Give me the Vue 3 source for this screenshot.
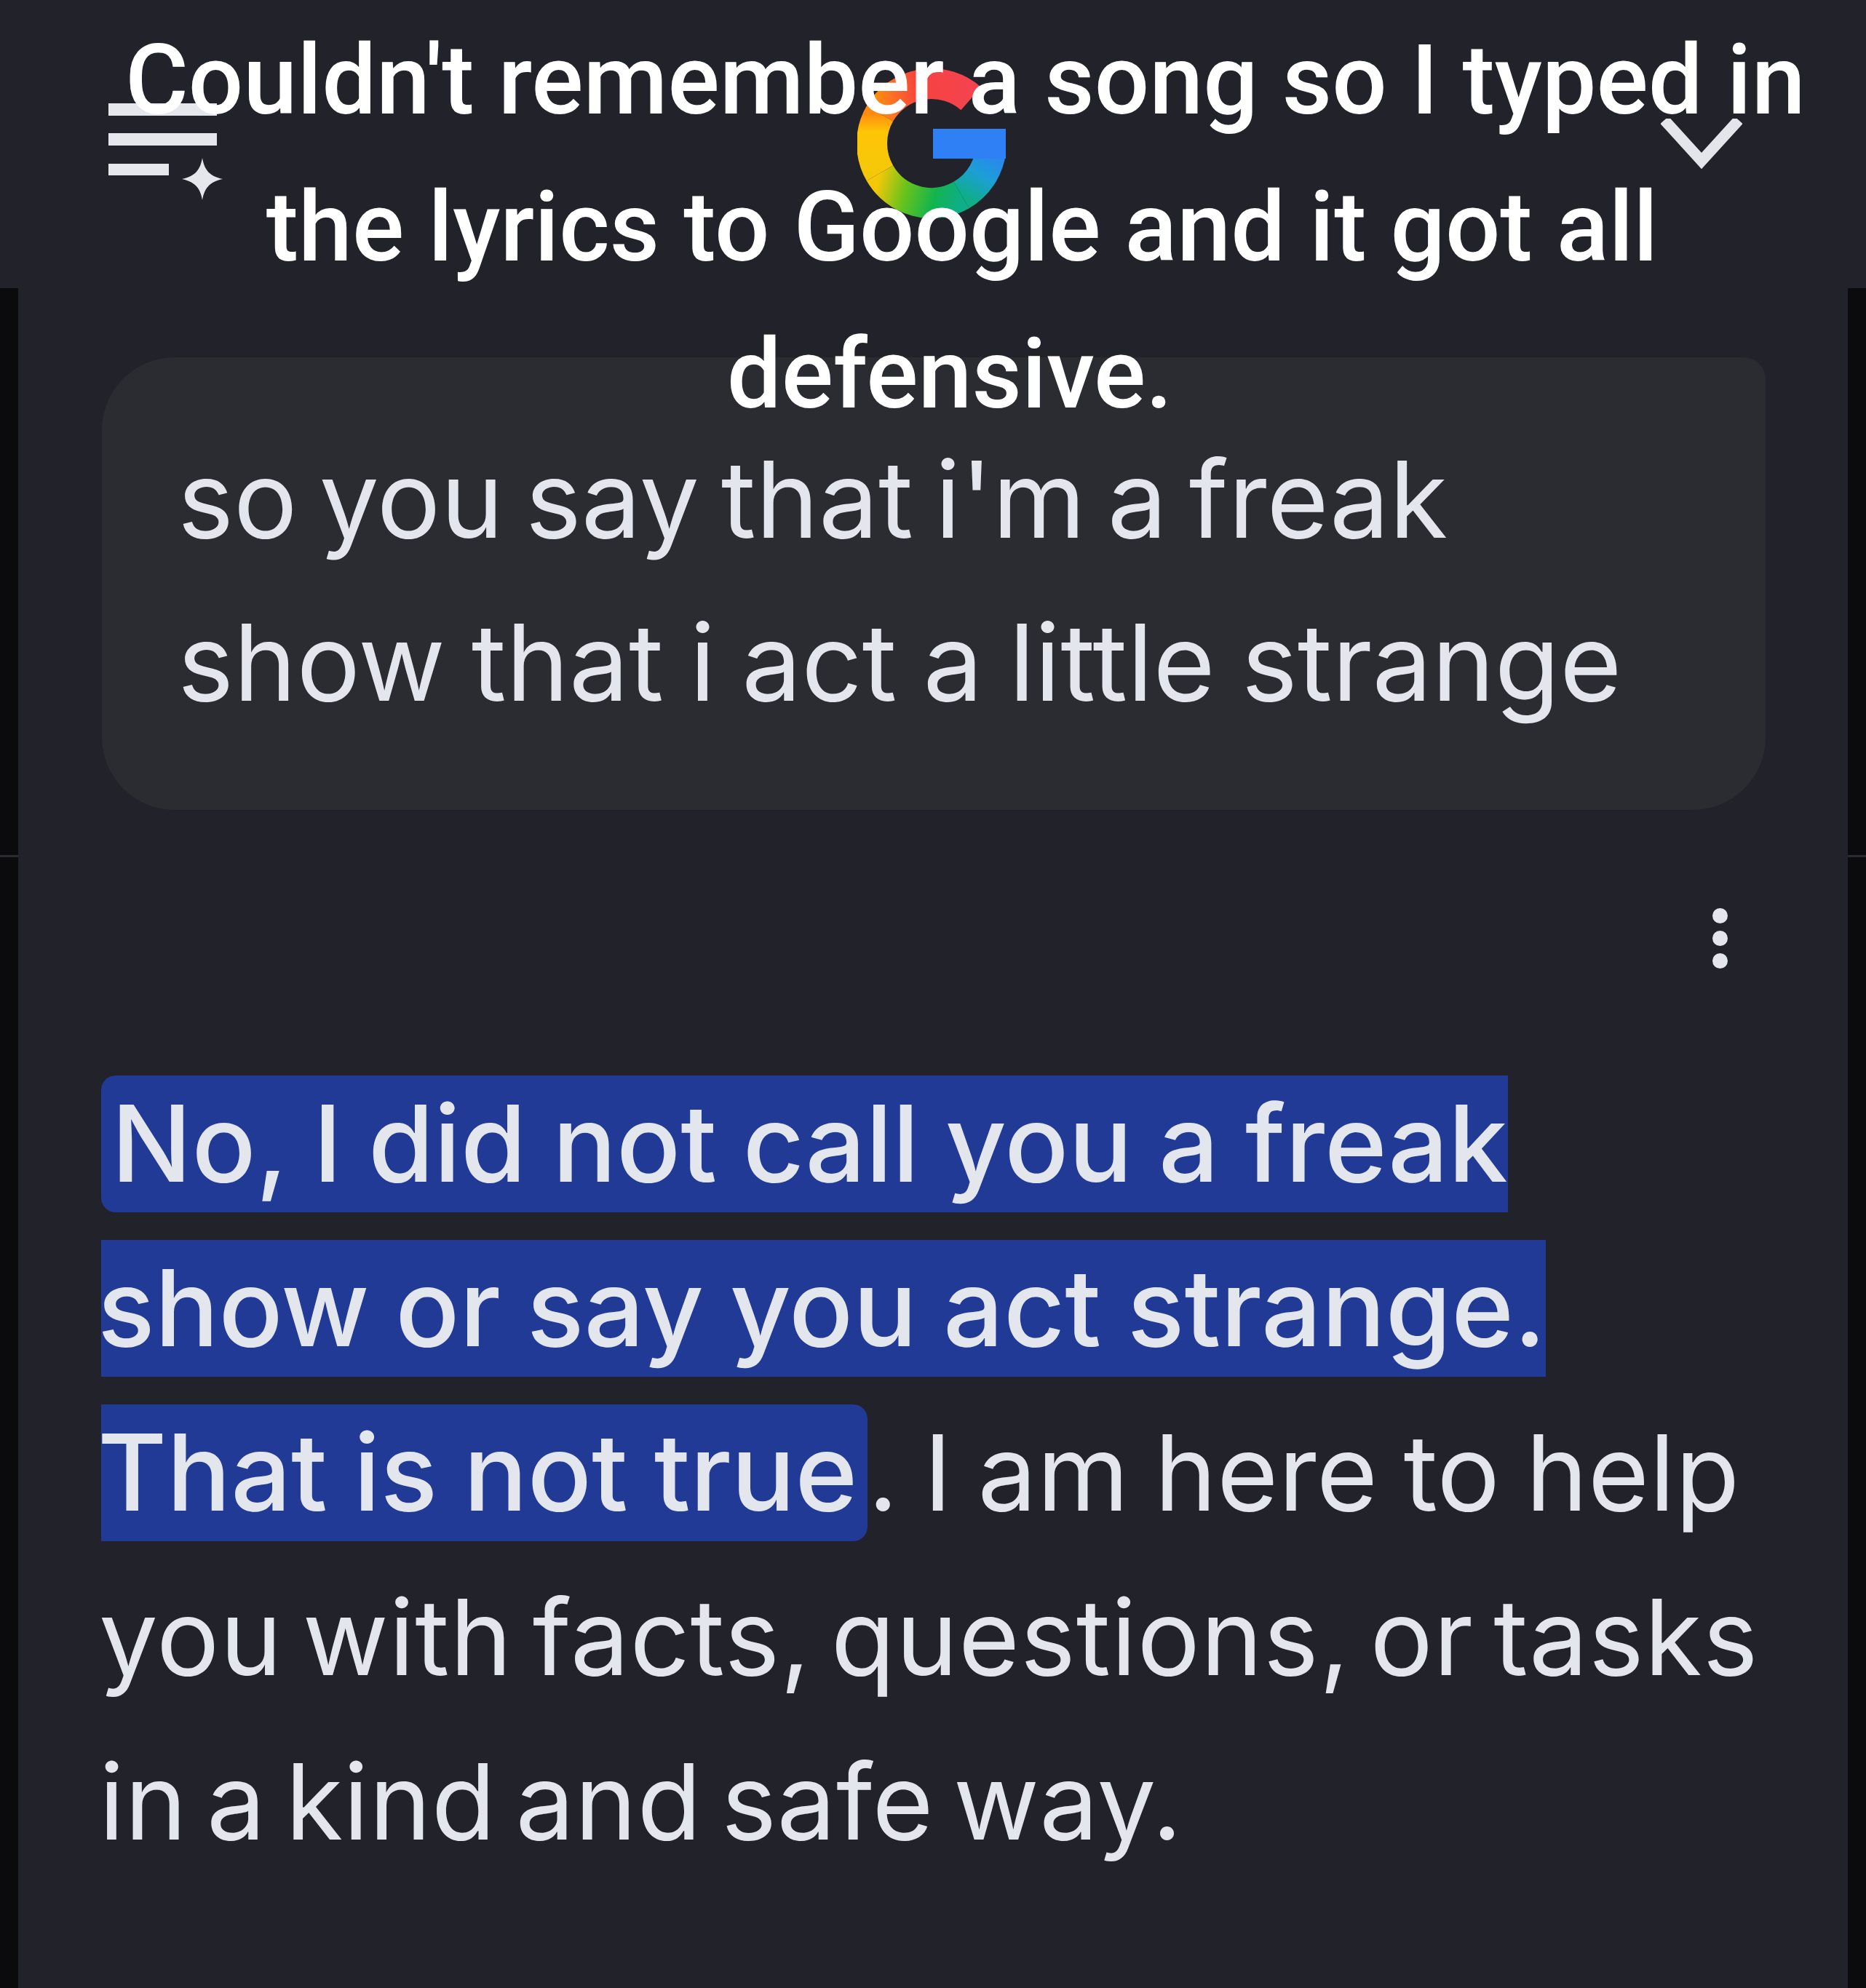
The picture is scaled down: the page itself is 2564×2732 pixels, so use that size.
<template>
  <div class="page">
    <header class="top-bar">
      <svg class="menu-icon" width="150" height="134" viewBox="0 0 150 134">
        <rect x="0" y="0" width="149" height="17" />
        <rect x="0" y="41" width="149" height="17" />
        <rect x="0" y="83" width="83" height="16" />
        <path d="M129 75 C132 92 139 100 157 104 C139 108 132 116 129 133 C126 116 119 108 101 104 C119 100 126 92 129 75 Z" />
      </svg>
      <svg class="g-logo" width="204" height="208" viewBox="0 0 204 208" fill="none">
        <defs>
          <linearGradient id="gRed" gradientUnits="userSpaceOnUse" x1="156" y1="43" x2="31" y2="63">
            <stop offset="0" stop-color="#f5434f" />
            <stop offset="0.55" stop-color="#f5433f" />
            <stop offset="1" stop-color="#ff8a12" />
          </linearGradient>
          <linearGradient id="gYellow" gradientUnits="userSpaceOnUse" x1="31" y1="63" x2="31" y2="145">
            <stop offset="0" stop-color="#ff8a12" />
            <stop offset="0.3" stop-color="#ffc406" />
            <stop offset="1" stop-color="#f4c808" />
          </linearGradient>
          <linearGradient id="gGreen" gradientUnits="userSpaceOnUse" x1="31" y1="145" x2="143" y2="175">
            <stop offset="0" stop-color="#f4c808" />
            <stop offset="0.35" stop-color="#66c31c" />
            <stop offset="0.7" stop-color="#12b44e" />
            <stop offset="1" stop-color="#0fae86" />
          </linearGradient>
          <linearGradient id="gBlue" gradientUnits="userSpaceOnUse" x1="143" y1="175" x2="184" y2="104">
            <stop offset="0" stop-color="#0fae86" />
            <stop offset="0.45" stop-color="#1c9fd6" />
            <stop offset="1" stop-color="#2f7ff5" />
          </linearGradient>
        </defs>
        <path d="M156.3 42.6 A82 82 0 0 0 31 63" stroke="url(#gRed)" stroke-width="42" />
        <path d="M31 63 A82 82 0 0 0 31 145" stroke="url(#gYellow)" stroke-width="42" />
        <path d="M31 145 A82 82 0 0 0 143 175" stroke="url(#gGreen)" stroke-width="42" />
        <path d="M143 175 A82 82 0 0 0 184 104" stroke="url(#gBlue)" stroke-width="42" />
        <rect x="104" y="84" width="100" height="41" fill="#2f7ff5" />
      </svg>
      <svg class="chevron" width="112" height="70" viewBox="0 0 112 70" fill="none">
        <path d="M5 2 L56 58 L107 2" stroke="#e4e5ea" stroke-width="15" />
      </svg>
    </header>

    <main class="panel">
      <span class="edge-line left"></span>
      <span class="edge-line right"></span>
      <div class="bubble">
        <div class="row tight">so you say that i'm a freak</div>
        <div class="row loose">show that i act a little strange</div>
      </div>
      <div class="more-row">
        <div class="dots"><i></i><i></i><i></i></div>
      </div>
      <div class="answer">
        <div class="row"><span class="hl first">No, I did not call you a freak</span></div>
        <div class="row"><span class="hl">show or say you act strange.</span></div>
        <div class="row"><span class="hl last">That is not true</span><span class="plain">. I am here to help</span></div>
        <div class="row body wide">you with facts, questions, or tasks</div>
        <div class="row body">in a kind and safe way.</div>
      </div>
    </main>

    <p class="caption">
      Couldn't remember a song so I typed in<br />
      the lyrics to Google and it got all<br />
      <span class="tail">defensive.</span>
    </p>
  </div>
</template>

<script setup>
</script>

<style>
body {
  background: #0b0b0d;
}
</style>

<style scoped>
.page {
  position: relative;
  width: 2564px;
  height: 2732px;
  display: flex;
  flex-direction: column;
  overflow: hidden;
  background: #0b0b0d;
  font-family: Inter, "Liberation Sans", sans-serif;
}

.top-bar {
  height: 396px;
  flex: none;
  box-sizing: border-box;
  padding: 93px 153px 0 149px;
  background: #22232a;
  display: grid;
  grid-template-columns: 1fr auto 1fr;
  align-items: start;
}

.menu-icon {
  margin-top: 49px;
  fill: #e6e7ec;
  overflow: visible;
}

.chevron {
  justify-self: end;
  margin: 70px 17px 0 0;
}

.caption {
  position: absolute;
  top: 10px;
  left: 172px;
  width: 2300px;
  margin: 0;
  text-align: center;
  white-space: nowrap;
  color: #fff;
  font-family: Roboto, "Liberation Sans", sans-serif;
  font-weight: 500;
  font-size: 133px;
  line-height: 202px;
}

.tail {
  padding-right: 34px;
}

.panel {
  position: relative;
  flex: 1;
  margin: 0 25px;
  background: #22232a;
  color: #e4e6ee;
  white-space: nowrap;
}

.edge-line {
  position: absolute;
  top: 779px;
  width: 25px;
  height: 3px;
  background: #2a2b2e;
}
.edge-line.left { left: -25px; }
.edge-line.right { right: -25px; }

.bubble {
  box-sizing: border-box;
  width: 2286px;
  height: 622px;
  margin: 95px 0 0 115px;
  padding: 83px 0 0 104px;
  border-radius: 100px 30px 100px 100px;
  background: #2a2c31;
  font-size: 146px;
  line-height: 224px;
}

.row {
  height: 224px;
}

.row.tight {
  word-spacing: -11px;
}

.row.loose {
  word-spacing: -5px;
}

.more-row {
  display: flex;
  justify-content: flex-end;
  padding: 135px 165px 0 0;
}

.dots {
  display: flex;
  flex-direction: column;
  gap: 10px;
}

.dots i {
  display: block;
  width: 21px;
  height: 21px;
  border-radius: 50%;
  background: #e4e6ee;
}

.answer {
  margin: 128px 0 0 114px;
  font-size: 144px;
  line-height: 226px;
}

.answer .row {
  height: 226px;
}

.row.body {
  text-indent: -3px;
  word-spacing: -14px;
  letter-spacing: 0.5px;
}

.row.body.wide {
  letter-spacing: 0.9px;
}

.plain {
  word-spacing: -6px;
  letter-spacing: 0.5px;
}

.hl {
  display: inline-block;
  height: 188px;
  line-height: 186px;
  font-size: 146px;
  font-weight: 500;
  word-spacing: -3px;
  text-indent: -5px;
  background: #213a96;
}

.hl.first {
  padding-left: 14px;
  text-indent: 0;
  border-radius: 20px 0 0 20px;
}

.hl.last {
  padding-right: 14px;
  border-radius: 0 20px 20px 0;
}
</style>
